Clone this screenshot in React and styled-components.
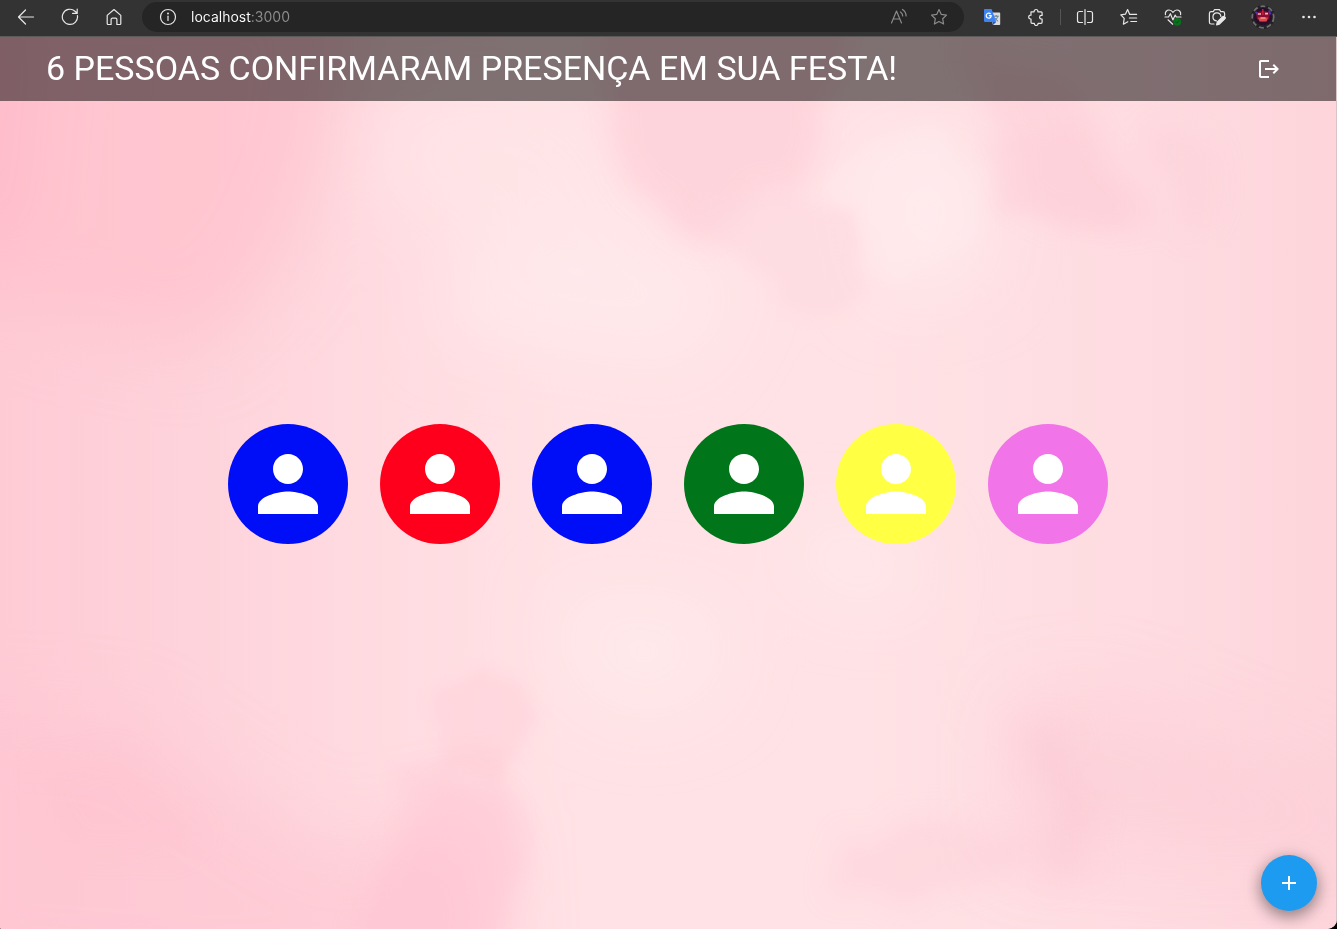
import React from "react";
import styled, { createGlobalStyle } from "styled-components";

const GlobalStyle = createGlobalStyle`
  *, *::before, *::after { box-sizing: border-box; }
  body {
    margin: 0;
    background: #000;
    font-family: Roboto, "Liberation Sans", sans-serif;
  }
  button { font: inherit; border: 0; padding: 0; background: none; cursor: pointer; }
`;

const Window = styled.div`
  min-height: 100vh;
  display: flex;
  flex-direction: column;
  border-radius: 0 0 10px 2px;
  overflow: hidden;
  background: #333;
`;

/* Browser toolbar */

const Toolbar = styled.nav`
  display: flex;
  align-items: center;
  height: 37px;
  padding: 0 6px 2px 4px;
  border-bottom: 1px solid #5c5a5b;
  background: #333;
  color: #e8e8e8;
`;

const ToolButton = styled.button`
  display: flex;
  align-items: center;
  justify-content: center;
  flex: none;
  width: ${({ $width }) => $width || 44}px;
  height: 32px;
  color: ${({ $muted }) => ($muted ? "#8b8b8b" : "inherit")};
`;

const AddressBar = styled.form`
  display: flex;
  align-items: center;
  flex: 1;
  min-width: 0;
  height: 30px;
  margin: 0 6px;
  padding: 0 5px 0 6px;
  border-radius: 15px;
  background: #252525;
`;

const AddressInput = styled.input`
  flex: 1;
  min-width: 0;
  height: 30px;
  margin-left: 3px;
  padding: 0;
  border: 0;
  outline: 0;
  font: 400 14px/30px Inter, "Liberation Sans", sans-serif;
  color: transparent;
  background: linear-gradient(90deg, #fff 60px, #8d8d8d 60px);
  -webkit-background-clip: text;
  background-clip: text;
`;

const Divider = styled.span`
  flex: none;
  width: 1px;
  height: 16px;
  margin: 0 2px;
  background: #555;
`;

/* Page */

const Page = styled.div`
  position: relative;
  isolation: isolate;
  flex: 1;
  display: flex;
  flex-direction: column;
  border-right: 1px solid #d9c4c8;
  background: #ffe0e4;
`;

const Backdrop = styled.svg`
  position: absolute;
  inset: 0;
  z-index: -1;
  width: 100%;
  height: 100%;
`;

const Header = styled.header`
  display: flex;
  align-items: center;
  justify-content: space-between;
  min-height: 64px;
  padding: 0 47px 0 46px;
  background: rgba(0, 0, 0, 0.5);
  color: #fff;
`;

const Title = styled.h1`
  margin: 0;
  padding-bottom: 2px;
  font-size: 34px;
  line-height: 42px;
  font-weight: 400;
`;

const IconButton = styled.button`
  display: flex;
  padding: 8px;
  color: #fff;
`;

const Main = styled.main`
  flex: 1;
  display: flex;
  align-items: center;
  justify-content: center;
  padding-bottom: 62px;
`;

const GuestList = styled.ul`
  display: flex;
  flex-wrap: wrap;
  justify-content: center;
  gap: 32px;
  margin: 0;
  padding: 0;
  list-style: none;
`;

const Guest = styled.li`
  display: flex;
  align-items: center;
  justify-content: center;
  width: 120px;
  height: 120px;
  border-radius: 50%;
  color: #fff;
  background: ${({ $color }) => $color};
`;

const AddButton = styled.button`
  position: fixed;
  right: 20px;
  bottom: 18px;
  display: flex;
  align-items: center;
  justify-content: center;
  width: 56px;
  height: 56px;
  border-radius: 50%;
  color: #fff;
  background: #1d9bf0;
  box-shadow: 0 5px 16px rgba(0, 0, 0, 0.4), 0 3px 24px rgba(0, 0, 0, 0.1);
`;

const Line = ({ size = 18, children, ...rest }) => (
  <svg width={size} height={size} viewBox={`0 0 ${size} ${size}`} fill="none" stroke="currentColor"
    strokeWidth="1.2" strokeLinecap="round" strokeLinejoin="round" aria-hidden="true" {...rest}>
    {children}
  </svg>
);

const Solid = ({ size = 24, d }) => (
  <svg width={size} height={size} viewBox="0 0 24 24" fill="currentColor" aria-hidden="true">
    <path d={d} />
  </svg>
);

const PERSON = "M12 12c2.21 0 4-1.79 4-4s-1.79-4-4-4-4 1.79-4 4 1.79 4 4 4m0 2c-2.67 0-8 1.34-8 4v2h16v-2c0-2.66-5.33-4-8-4";
const LOGOUT = "m17 7-1.41 1.41L18.17 11H8v2h10.17l-2.58 2.58L17 17l5-5zM4 5h8V3H4c-1.1 0-2 .9-2 2v14c0 1.1.9 2 2 2h8v-2H4z";
const PLUS = "M19 13h-6v6h-2v-6H5v-2h6V5h2v6h6z";

const BackIcon = () => <Line><path d="M16.5 9H1.5M8.5 2L1.5 9l7 7" /></Line>;
const ReloadIcon = () => <Line><path d="M16.4 7.5A7.6 7.6 0 1 1 14 3.2l2 1.8M16.2 1v4.4h-4.6" /></Line>;
const HomeIcon = () => (
  <Line><path d="M2.2 7.4L9 1.5l6.8 5.9v8.2a.9.9 0 0 1-.9.9h-3v-5a1.3 1.3 0 0 0-1.3-1.3H7.4a1.3 1.3 0 0 0-1.3 1.3v5h-3a.9.9 0 0 1-.9-.9z" /></Line>
);
const InfoIcon = () => (
  <Line><circle cx="9" cy="9" r="7.5" /><path d="M9 8.2v4.3" /><circle cx="9" cy="5.5" r=".4" fill="currentColor" /></Line>
);
const ReadAloudIcon = () => (
  <Line><path d="M1.5 15L6.5 3l5 12M3.2 11h6.6M10.5 4a5 5 0 0 1 2.2 4M12.5 1.5a8 8 0 0 1 3.6 6.5" /></Line>
);
const StarIcon = () => (
  <Line><path d="M9 1.6l2.3 4.8 5.2.7-3.8 3.7.9 5.2L9 13.5 4.4 16l.9-5.2L1.5 7.1l5.2-.7z" /></Line>
);
const TranslateIcon = () => (
  <svg width="18" height="18" viewBox="0 0 18 18" aria-hidden="true">
    <path d="M6 4.5h10.4a.8.8 0 0 1 .8.8v11a.8.8 0 0 1-.8.8H10z" fill="#dadce0" />
    <path d="M10.5 8.2h5.3M13.2 7v1.2M14.7 8.4c-.5 2-1.8 3.6-3.6 4.8M11.7 9.7c.8 1.6 1.9 2.7 3.4 3.5" stroke="#607d8b" strokeWidth="1" fill="none" />
    <path d="M1.8 1h6.8l4.6 12.9H1.8a.8.8 0 0 1-.8-.8V1.8A.8.8 0 0 1 1.8 1z" fill="#3f83f0" />
    <path d="M9.4 13.9h3.8L10 17.1z" fill="#2456c6" />
    <path d="M7.6 6A2.5 2.5 0 1 0 8.2 7.7H5.9" stroke="#fff" strokeWidth="1.2" fill="none" />
  </svg>
);
const PuzzleIcon = () => (
  <Line><path d="M4 3.8h3.1v-.4a1.9 1.9 0 0 1 3.8 0v.4h3.2a1 1 0 0 1 1 1v2.6h-.7a1.8 1.8 0 0 0 0 3.6h.7v3.3a1 1 0 0 1-1 1h-3v.3a1.9 1.9 0 0 1-3.8 0v-.3H5a1 1 0 0 1-1-1V11h-.4a1.9 1.9 0 0 1 0-3.8H4z" /></Line>
);
const SplitIcon = () => (
  <Line><path d="M9 1.5v15M6.5 3.5h-3a2 2 0 0 0-2 2v7a2 2 0 0 0 2 2h3M11.5 3.5h3a2 2 0 0 1 2 2v7a2 2 0 0 1-2 2h-3" /></Line>
);
const FavoritesIcon = () => (
  <Line><path d="M11 6.4H9.7L7.6 1.6 5.4 6.2l-4.6.7 3.4 3.4-.8 5.9 4.4-2.5M10.8 6.4h5.8M9.4 10h7.2M10.8 13.5h5.8" /></Line>
);
const HealthIcon = () => (
  <Line>
    <path d="M1.4 6.7C.8 3.8 3 2 5.1 2 6.8 2 8 2.9 9 4.3 10 2.9 11.2 2 12.9 2 15 2 17.2 3.8 16.6 6.7M1 9h3.5L6.4 5.7l2.5 6.2L11.2 7l1.1 2H17M4 11.8l4.7 4.4" />
    <circle cx="13.3" cy="13.9" r="3.8" fill="#08731c" stroke="none" />
    <path d="M11.7 14l1.1 1.1 2.2-2.3" stroke="#124a1b" strokeWidth="1" />
  </Line>
);
const CameraIcon = () => (
  <Line>
    <path d="M6 16H3.2a1.8 1.8 0 0 1-1.8-1.8V5.4a1.8 1.8 0 0 1 1.8-1.8h2L6.6 1.6h4.8l1.4 2h2a1.8 1.8 0 0 1 1.8 1.8v2.1M8.4 12.9a4 4 0 1 1 4.5-4.6" />
    <path d="M8.6 16.8l.7-2.8 5.4-5.2a1.4 1.4 0 0 1 2.1 2.1l-5.4 5.2z" fill="currentColor" />
  </Line>
);
const MoreIcon = () => (
  <Line stroke="none" fill="currentColor"><circle cx="3.5" cy="9" r="1.3" /><circle cx="9" cy="9" r="1.3" /><circle cx="14.5" cy="9" r="1.3" /></Line>
);
const ProfilePicture = () => (
  <svg width="24" height="24" viewBox="0 0 24 24" aria-hidden="true">
    <defs>
      <clipPath id="profile"><circle cx="12" cy="12" r="12" /></clipPath>
      <filter id="profileSoft"><feGaussianBlur stdDeviation=".6" /></filter>
    </defs>
    <g clipPath="url(#profile)">
      <rect width="24" height="24" fill="#232326" />
      <g filter="url(#profileSoft)">
        <circle cx="12" cy="12" r="10.8" fill="none" stroke="#6f6f72" strokeWidth="1.8" strokeDasharray="5 3" />
        <ellipse cx="12" cy="11.6" rx="9" ry="8.4" fill="#2a0a2c" />
        <path d="M5 8q7-4 14 0l-1 6q-6 5-12 0z" fill="#8a1030" />
        <path d="M4.5 7l3 2.5M18 5.5l1.5 4" stroke="#4a35b8" strokeWidth="2" />
        <path d="M7 9h3M14 8.6h3" stroke="#f2b6b8" strokeWidth="1.6" />
        <path d="M7 12.5h10l-1.5 4h-7z" fill="#e0484c" />
        <path d="M9.5 13h5" stroke="#f3a49a" strokeWidth="1.4" />
        <path d="M11.8 4v6" stroke="#c12640" strokeWidth="1.4" />
      </g>
    </g>
  </svg>
);

/* Watercolour wash: a base gradient with softly blurred pigment patches. */
const Watercolor = () => (
  <Backdrop viewBox="0 37 1336 892" preserveAspectRatio="none" aria-hidden="true">
    <defs>
      <linearGradient id="wash">
        <stop offset="0" stopColor="#fecbd5" />
        <stop offset=".14" stopColor="#fed3db" />
        <stop offset=".3" stopColor="#ffdce1" />
        <stop offset=".42" stopColor="#ffe2e5" />
        <stop offset=".65" stopColor="#ffe2e5" />
        <stop offset=".85" stopColor="#fedce1" />
        <stop offset="1" stopColor="#fdd5db" />
      </linearGradient>
      <filter id="broad" x="-50%" y="-50%" width="200%" height="200%"><feGaussianBlur stdDeviation="36" /></filter>
      <filter id="soft" x="-50%" y="-50%" width="200%" height="200%">
        <feTurbulence type="fractalNoise" baseFrequency=".012" numOctaves="4" seed="7" />
        <feDisplacementMap in="SourceGraphic" scale="60" xChannelSelector="R" yChannelSelector="G" />
        <feGaussianBlur stdDeviation="13" />
      </filter>
      <filter id="edge" x="-30%" y="-30%" width="160%" height="160%">
        <feTurbulence type="fractalNoise" baseFrequency=".02" numOctaves="4" seed="4" />
        <feDisplacementMap in="SourceGraphic" scale="36" xChannelSelector="R" yChannelSelector="G" />
        <feGaussianBlur stdDeviation="7" />
      </filter>
    </defs>
    <rect y="37" width="1336" height="892" fill="url(#wash)" />
    <g filter="url(#broad)">
      <path d="M-80-40H350L325 160 280 270 200 350 60 320-80 270z" fill="#ffc0cc" opacity=".7" />
      <path d="M-60 0H40L20 240-60 280z" fill="#ffb6c9" opacity=".6" />
      <path d="M470 250L620 210 740 280 690 370 560 350 430 330z" fill="#ffedee" opacity=".65" />
      <path d="M560 590L720 600 720 690 640 720 570 680z" fill="#ffeced" opacity=".7" />
      <path d="M780 520L900 540 920 600 820 590z" fill="#ffecee" opacity=".8" />
      <path d="M-60 710L130 720 250 800 330 850 490 810 500 1000H200L-60 980z" fill="#fec5d1" opacity=".6" />
      <path d="M1010 700L1100 690 1330 780 1380 860 1180 860 1010 850z" fill="#fdcad4" opacity=".5" />
      <path d="M380 100L500 80 600 130 620 220 460 240 370 190z" fill="#ffe8ea" opacity=".6" />
      <path d="M860 150L980 130 990 280 880 300z" fill="#ffecee" opacity=".7" />
    </g>
    <g filter="url(#soft)">
      <path d="M620-20H870L820 120 790 200 700 240 645 200 610 120z" fill="#fecbd6" opacity=".6" />
      <path d="M970 50L1090 100 1140 220 1070 230 1010 200 1010 150z" fill="#ffc9d4" opacity=".45" />
      <path d="M1150 130L1200 120 1220 200 1180 240z" fill="#fdcdd6" opacity=".35" />
      <path d="M380 880L440 780 510 800 525 870 490 960H330z" fill="#fec4d0" opacity=".35" />
      <path d="M30 770L110 760 210 830 160 870 60 850z" fill="#ffbfce" opacity=".3" />
      <path d="M1020 720L1070 740 1110 880 1040 880z" fill="#fdc5d0" opacity=".35" />
      <path d="M850 830L960 820 1060 860 900 910 840 890z" fill="#fdcbd5" opacity=".35" />
    </g>
    <g filter="url(#edge)">
      <path d="M825 185L870 130 930 125 970 160 985 240 900 280 860 240z" fill="#ffebed" opacity=".5" />
      <path d="M690 190L790 190 850 220 865 290 830 320 780 310 740 260z" fill="#fed8df" opacity=".5" />
      <path d="M435 695L490 672 538 705 520 750 500 790 440 760z" fill="#feced8" opacity=".45" />
      <path d="M400 760L500 750 528 830 510 890 470 960 340 960 400 850z" fill="#fec8d3" opacity=".3" />
      <path d="M985 140L1050 130 1110 165 1135 230 1070 220 1000 220z" fill="#fecdd7" opacity=".3" />
    </g>
  </Backdrop>
);

const guests = [
  { id: 1, color: "#000df7" },
  { id: 2, color: "#ff001c" },
  { id: 3, color: "#000df7" },
  { id: 4, color: "#00751a" },
  { id: 5, color: "#ffff43" },
  { id: 6, color: "#f174e8" },
];

const extensions = [
  { label: "Divisão de tela", Icon: SplitIcon },
  { label: "Favoritos", Icon: FavoritesIcon },
  { label: "Fundamentos do navegador", Icon: HealthIcon },
  { label: "Captura de tela", Icon: CameraIcon },
];

export default function App() {
  return (
    <Window>
      <GlobalStyle />
      <Toolbar aria-label="Navegador">
        <ToolButton type="button" aria-label="Voltar"><BackIcon /></ToolButton>
        <ToolButton type="button" aria-label="Atualizar"><ReloadIcon /></ToolButton>
        <ToolButton type="button" aria-label="Página inicial"><HomeIcon /></ToolButton>
        <AddressBar onSubmit={(event) => event.preventDefault()}>
          <ToolButton type="button" $width={40} aria-label="Informações do site"><InfoIcon /></ToolButton>
          <AddressInput aria-label="Endereço" defaultValue="localhost:3000" spellCheck={false} />
          <ToolButton type="button" $width={40} $muted aria-label="Ler em voz alta"><ReadAloudIcon /></ToolButton>
          <ToolButton type="button" $width={40} $muted aria-label="Adicionar aos favoritos"><StarIcon /></ToolButton>
        </AddressBar>
        <ToolButton type="button" aria-label="Traduzir"><TranslateIcon /></ToolButton>
        <ToolButton type="button" aria-label="Extensões"><PuzzleIcon /></ToolButton>
        <Divider />
        {extensions.map(({ label, Icon }) => (
          <ToolButton key={label} type="button" aria-label={label}><Icon /></ToolButton>
        ))}
        <ToolButton type="button" $width={48} aria-label="Perfil"><ProfilePicture /></ToolButton>
        <ToolButton type="button" aria-label="Mais opções"><MoreIcon /></ToolButton>
      </Toolbar>
      <Page>
        <Watercolor />
        <Header>
          <Title>{guests.length} PESSOAS CONFIRMARAM PRESENÇA EM SUA FESTA!</Title>
          <IconButton type="button" aria-label="Sair"><Solid d={LOGOUT} /></IconButton>
        </Header>
        <Main>
          <GuestList>
            {guests.map(({ id, color }) => (
              <Guest key={id} $color={color}><Solid size={90} d={PERSON} /></Guest>
            ))}
          </GuestList>
        </Main>
        <AddButton type="button" aria-label="Adicionar convidado"><Solid d={PLUS} /></AddButton>
      </Page>
    </Window>
  );
}
